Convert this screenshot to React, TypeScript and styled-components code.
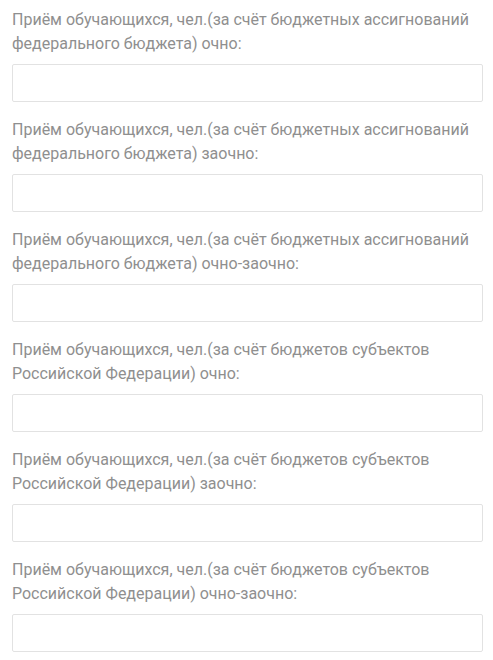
import React from "react";
import styled, { createGlobalStyle } from "styled-components";

const fields = [
  "Приём обучающихся, чел.(за счёт бюджетных ассигнований федерального бюджета) очно:",
  "Приём обучающихся, чел.(за счёт бюджетных ассигнований федерального бюджета) заочно:",
  "Приём обучающихся, чел.(за счёт бюджетных ассигнований федерального бюджета) очно-заочно:",
  "Приём обучающихся, чел.(за счёт бюджетов субъектов Российской Федерации) очно:",
  "Приём обучающихся, чел.(за счёт бюджетов субъектов Российской Федерации) заочно:",
  "Приём обучающихся, чел.(за счёт бюджетов субъектов Российской Федерации) очно-заочно:",
];

export default function App() {
  return (
    <>
      <GlobalStyle />
      <Form onSubmit={(e) => e.preventDefault()}>
        {fields.map((label, i) => (
          <Field key={i}>
            <Label htmlFor={"f" + i}>{label}</Label>
            <TextInput id={"f" + i} type="text" />
          </Field>
        ))}
      </Form>
    </>
  );
}

const GlobalStyle = createGlobalStyle`
  body {
    margin: 0;
    background: #ffffff;
    font-family: Roboto, "Noto Sans", sans-serif;
  }
`;

const Form = styled.form`
  display: flex;
  flex-direction: column;
  gap: 16px;
  padding: 8px 10px 0 12px;
  width: 493px;
  box-sizing: border-box;
`;

const Field = styled.div`
  display: flex;
  flex-direction: column;
  gap: 8px;
`;

const Label = styled.label`
  font-size: 16px;
  font-weight: 400;
  line-height: 24px;
  color: #8f8f8f;
`;

const TextInput = styled.input`
  height: 38px;
  box-sizing: border-box;
  border: 1px solid #e2e2e2;
  border-radius: 2px;
  background: #ffffff;
  padding: 0 10px;
  font-family: Roboto, sans-serif;
  font-size: 15px;
  outline: none;
`;
